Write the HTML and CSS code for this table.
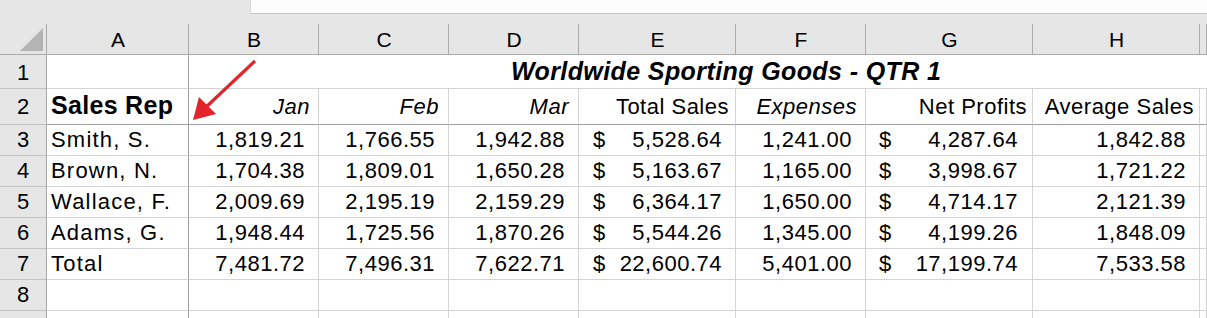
FILE: index.html
```html
<!DOCTYPE html>
<html lang="en">
<head>
<meta charset="utf-8">
<title>Worldwide Sporting Goods - QTR 1</title>
<link rel="stylesheet" href="styles.css">
</head>
<body>
<div class="topbar"><div class="tb-left"></div><div class="tb-box"></div></div>
<div class="sheet">
  <div class="row hdr">
    <div class="corner"><span class="tri"></span></div>
    <div class="ch">A</div><div class="ch">B</div><div class="ch">C</div><div class="ch">D</div>
    <div class="ch">E</div><div class="ch">F</div><div class="ch">G</div><div class="ch">H</div><div class="ch"></div>
  </div>
  <div class="row r1">
    <div class="rh">1</div><div class="c ca"></div>
    <div class="c title">Worldwide Sporting Goods - QTR 1</div>
  </div>
  <div class="row r2">
    <div class="rh">2</div>
    <div class="c ca bold">Sales Rep</div>
    <div class="c hd it p8">Jan</div>
    <div class="c hd it p9">Feb</div>
    <div class="c hd it p9">Mar</div>
    <div class="c hd p6">Total Sales</div>
    <div class="c hd it p8">Expenses</div>
    <div class="c hd p5">Net Profits</div>
    <div class="c hd p5">Average Sales</div>
    <div class="c"></div>
  </div>
  <div class="row">
    <div class="rh">3</div><div class="c ca name">Smith, S.</div>
    <div class="c num">1,819.21</div><div class="c num">1,766.55</div><div class="c num">1,942.88</div>
    <div class="c acc"><span>$</span><span>5,528.64</span></div>
    <div class="c num">1,241.00</div>
    <div class="c acc g"><span>$</span><span>4,287.64</span></div>
    <div class="c num">1,842.88</div><div class="c"></div>
  </div>
  <div class="row">
    <div class="rh">4</div><div class="c ca name">Brown, N.</div>
    <div class="c num">1,704.38</div><div class="c num">1,809.01</div><div class="c num">1,650.28</div>
    <div class="c acc"><span>$</span><span>5,163.67</span></div>
    <div class="c num">1,165.00</div>
    <div class="c acc g"><span>$</span><span>3,998.67</span></div>
    <div class="c num">1,721.22</div><div class="c"></div>
  </div>
  <div class="row">
    <div class="rh">5</div><div class="c ca name">Wallace, F.</div>
    <div class="c num">2,009.69</div><div class="c num">2,195.19</div><div class="c num">2,159.29</div>
    <div class="c acc"><span>$</span><span>6,364.17</span></div>
    <div class="c num">1,650.00</div>
    <div class="c acc g"><span>$</span><span>4,714.17</span></div>
    <div class="c num">2,121.39</div><div class="c"></div>
  </div>
  <div class="row">
    <div class="rh">6</div><div class="c ca name">Adams, G.</div>
    <div class="c num">1,948.44</div><div class="c num">1,725.56</div><div class="c num">1,870.26</div>
    <div class="c acc"><span>$</span><span>5,544.26</span></div>
    <div class="c num">1,345.00</div>
    <div class="c acc g"><span>$</span><span>4,199.26</span></div>
    <div class="c num">1,848.09</div><div class="c"></div>
  </div>
  <div class="row">
    <div class="rh">7</div><div class="c ca name">Total</div>
    <div class="c num">7,481.72</div><div class="c num">7,496.31</div><div class="c num">7,622.71</div>
    <div class="c acc"><span>$</span><span>22,600.74</span></div>
    <div class="c num">5,401.00</div>
    <div class="c acc g"><span>$</span><span>17,199.74</span></div>
    <div class="c num">7,533.58</div><div class="c"></div>
  </div>
  <div class="row">
    <div class="rh">8</div><div class="c ca"></div>
    <div class="c"></div><div class="c"></div><div class="c"></div><div class="c"></div>
    <div class="c"></div><div class="c"></div><div class="c"></div><div class="c"></div>
  </div>
  <div class="row r9">
    <div class="rh"></div><div class="c ca"></div>
    <div class="c"></div><div class="c"></div><div class="c"></div><div class="c"></div>
    <div class="c"></div><div class="c"></div><div class="c"></div><div class="c"></div>
  </div>
</div>
<svg class="arrow" width="1207" height="318" viewBox="0 0 1207 318" aria-hidden="true">
  <line x1="255" y1="61" x2="204" y2="109" stroke="#e3242b" stroke-width="3.2" stroke-linecap="butt"/>
  <polygon points="193,120 199,97 216,114" fill="#e3242b"/>
</svg>
</body>
</html>
```

FILE: styles.css
```css
html, body {
  margin: 0;
  padding: 0;
  background: #fff;
  overflow: hidden;
}

body {
  width: 1207px;
  height: 318px;
  font-family: "Liberation Sans", Arial, sans-serif;
  color: #000;
}

.topbar {
  display: flex;
  height: 14px;
}

.tb-left {
  width: 250px;
  background: #e6e6e6;
}

.tb-box {
  flex: 1;
  background: #fcfcfc;
  border-bottom: 1px solid #c6c6c6;
  border-left: 1px solid #d6d6d6;
}

.sheet {
  display: grid;
  grid-template-columns: 47px 142px 130px 130px 130px 157px 130px 167px 167px 1fr;
  grid-template-rows: 41px 34px 36px repeat(6, 31px) 1fr;
  height: 304px;
}

.row {
  display: contents;
}

.c, .rh, .ch, .corner {
  box-sizing: border-box;
  display: flex;
  align-items: flex-end;
  white-space: nowrap;
  line-height: normal;
  padding-bottom: 2px;
  min-width: 0;
}

.c {
  border-right: 1px solid #d4d4d4;
  border-bottom: 1px solid #d4d4d4;
  font-size: 22px;
  letter-spacing: 0.5px;
}

.rh {
  background: #e6e6e6;
  border-right: 1px solid #ababab;
  border-bottom: 1px solid #c2c2c2;
  justify-content: center;
  font-size: 22px;
}

.ch, .corner {
  background-color: #e6e6e6;
  background-image: linear-gradient(#ababab, #ababab);
  background-size: 1px 30px;
  background-position: right bottom;
  background-repeat: no-repeat;
  border-bottom: 1px solid #ababab;
  justify-content: center;
  font-size: 21px;
}

.corner {
  justify-content: flex-start;
  padding: 0;
}

.tri {
  width: 23px;
  height: 23px;
  margin: 0 0 3px 20px;
  background: #b4b4b4;
  clip-path: polygon(100% 0, 100% 100%, 0 100%);
}

/* frozen pane lines */
.ca {
  border-right-color: #a0a0a0;
  padding-left: 4px;
}

.name {
  letter-spacing: 1.2px;
}

.r2 .c {
  border-bottom-color: #a0a0a0;
  padding-bottom: 4px;
}

.r2 .rh {
  padding-bottom: 4px;
}

.title {
  grid-column: 3 / -1;
  border-right: none;
  padding-left: 322px;
  font-size: 25px;
  font-weight: bold;
  font-style: italic;
  letter-spacing: 0.4px;
}

.bold {
  font-weight: bold;
  font-size: 25px;
  letter-spacing: 0.3px;
}

.hd {
  justify-content: flex-end;
}

.it {
  font-style: italic;
}

.p5 { padding-right: 5px; }
.p6 { padding-right: 6px; }
.p8 { padding-right: 8px; }
.p9 { padding-right: 9px; }

.num {
  justify-content: flex-end;
  padding-right: 13px;
}

.acc {
  justify-content: space-between;
  padding-left: 14px;
  padding-right: 13px;
}

.acc.g {
  padding-left: 13px;
  padding-right: 14px;
}

.r9 .c, .r9 .rh {
  border-bottom: none;
}

.arrow {
  position: absolute;
  left: 0;
  top: 0;
  pointer-events: none;
}
```
